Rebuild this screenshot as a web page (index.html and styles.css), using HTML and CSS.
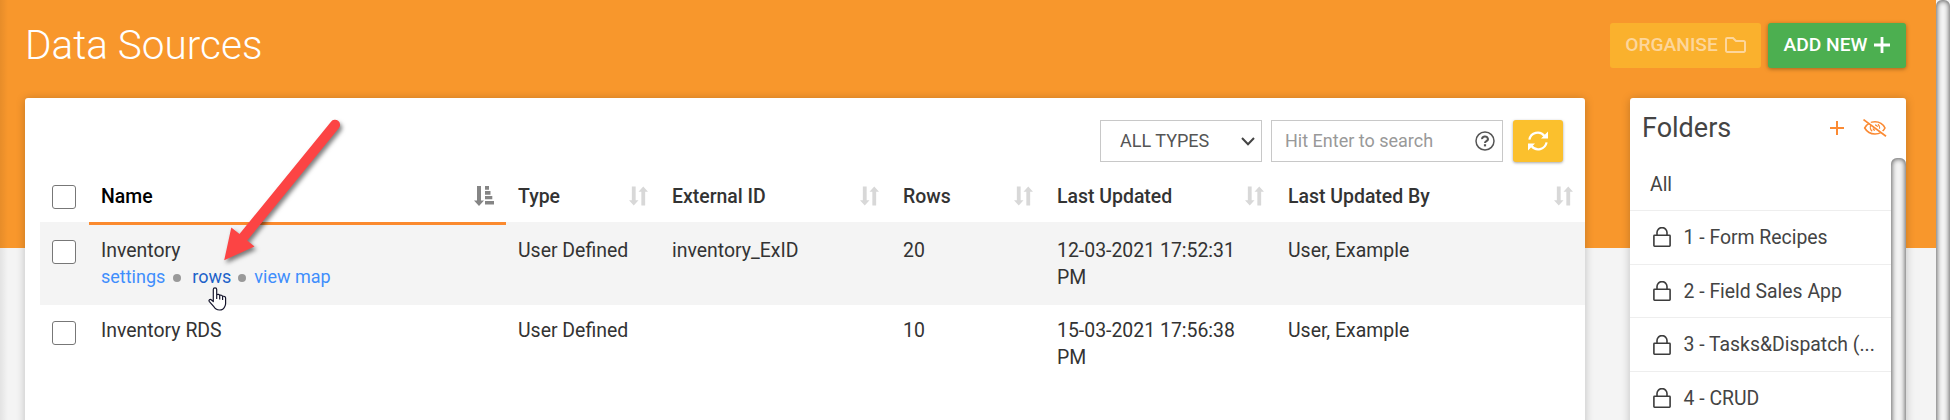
FILE: index.html
```html
<!DOCTYPE html>
<html lang="en">
<head>
<meta charset="utf-8">
<title>Data Sources</title>
<link rel="stylesheet" href="styles.css">
</head>
<body>
<svg class="defs" width="0" height="0">
  <symbol id="sort" viewBox="0 0 20 20"><path d="M3 0h4v14.500h3L5 20 0 14.500h3zM13 20h4V5.500h3L15 0l-5 5.500h3z"/></symbol>
  <symbol id="lock" viewBox="0 0 18 20"><path d="M1.500 8.300h15a.6.6 0 0 1 .6.600v9.700a.6.600 0 0 1-.6.600h-15a.6.600 0 0 1-.6-.600V8.900a.6.600 0 0 1 .6-.600zM4 8V5.600a5 5 0 0 1 10 0V8" fill="none" stroke="#3c3c3c" stroke-width="1.600"/></symbol>
</svg>
<div class="page">
  <main class="main">
    <header class="top">
      <h1 class="title">Data Sources</h1>
      <div class="actions">
        <button class="btn organise">ORGANISE
          <svg width="21" height="16" viewBox="0 0 21 16"><path d="M1 2.200A1.200 1.200 0 0 1 2.200 1H8l3 3h7.800A1.200 1.200 0 0 1 20 5.200v8.600a1.200 1.200 0 0 1-1.200 1.200H2.200A1.200 1.200 0 0 1 1 13.800z" fill="none" stroke="currentColor" stroke-width="2"/></svg>
        </button>
        <button class="btn add">ADD NEW
          <svg width="16" height="16" viewBox="0 0 16 16"><path d="M8 0v16M0 8h16" stroke="#fff" stroke-width="2.800"/></svg>
        </button>
      </div>
    </header>
    <div class="content">
      <section class="card sources">
        <div class="toolbar">
          <div class="select"><span>ALL TYPES</span>
            <svg width="14" height="9" viewBox="0 0 14 9"><path d="M1 1l6 6.200L13 1" fill="none" stroke="#444" stroke-width="2"/></svg>
          </div>
          <div class="search"><span>Hit Enter to search</span>
            <svg width="20" height="20" viewBox="0 0 20 20" fill="none" stroke="#555"><circle cx="10" cy="10" r="9" stroke-width="1.500"/><path d="M7.100 8.100a2.900 2.500 0 1 1 4.300 2.100c-1 .6-1.400.9-1.400 1.900" stroke-width="2"/><path d="M10 13.200v2.200" stroke-width="2.200"/></svg>
          </div>
          <button class="refresh">
            <svg width="20" height="20" viewBox="0 0 20 20" fill="none" stroke="#fff" stroke-width="2.200"><path d="M1.400 8.600A8.500 8.500 0 0 1 16.500 5M18.600 11.400A8.500 8.500 0 0 1 3.500 15"/><path d="M20 .6v7h-7zM0 19.400v-7h7z" fill="#fff" stroke="none"/></svg>
          </button>
        </div>
        <div class="grid">
          <div class="row head">
            <div class="cell pick"><i class="check"></i></div>
            <div class="cell sorted">Name
              <svg width="20" height="20" viewBox="0 0 20 20"><path d="M3 0h4v14.500h3L5 20 0 14.500h3zM11 0h4v3.700h-4zM11 5h5.500v3.700H11zM11 10h7.300v3.300H11zM11 15h9v3.600h-9z"/></svg></div>
            <div class="cell">Type <svg><use href="#sort"/></svg></div>
            <div class="cell">External ID <svg><use href="#sort"/></svg></div>
            <div class="cell">Rows <svg><use href="#sort"/></svg></div>
            <div class="cell">Last Updated <svg><use href="#sort"/></svg></div>
            <div class="cell">Last Updated By <svg><use href="#sort"/></svg></div>
          </div>
          <div class="row hovered">
            <div class="cell pick"><i class="check"></i></div>
            <div class="cell">Inventory
              <div class="links"><a>settings</a><i class="dot"></i><a class="current">rows</a><i class="dot"></i><a>view map</a></div>
            </div>
            <div class="cell">User Defined</div>
            <div class="cell">inventory_ExID</div>
            <div class="cell">20</div>
            <div class="cell">12-03-2021 17:52:31 PM</div>
            <div class="cell">User, Example</div>
          </div>
          <div class="row">
            <div class="cell pick"><i class="check"></i></div>
            <div class="cell">Inventory RDS</div>
            <div class="cell">User Defined</div>
            <div class="cell"></div>
            <div class="cell">10</div>
            <div class="cell">15-03-2021 17:56:38 PM</div>
            <div class="cell">User, Example</div>
          </div>
        </div>
      </section>
      <aside class="card folders">
        <div class="folders-head">
          <h2>Folders</h2>
          <svg class="plus" width="14" height="14" viewBox="0 0 14 14"><path d="M7 0v14M0 7h14" stroke="#fb8a33" stroke-width="2"/></svg>
          <svg width="24" height="18" viewBox="0 0 24 18" fill="none" stroke="#fb8a33" stroke-width="1.600"><path d="M1.700 9C4 5 7.600 2.800 12 2.800S20 5 22 9c-2 4-5.600 6-10 6S4 13 1.700 9z"/><path d="M8.200 5.500a5 5 0 0 0 1 6.700M15.500 12a5 5 0 0 0-.5-6.700M10 9.500a2.500 2.500 0 0 0 2 1.800M12 6a2.600 2.600 0 0 1 2.400 2" stroke-width="1.300"/><path d="M1.500 0L24 16.500" stroke="#fff" stroke-width="2"/><path d="M.5.6L23 17.300" stroke-width="1.700"/></svg>
        </div>
        <div class="folders-body">
          <ul>
            <li class="all">All</li>
            <li><svg class="lock"><use href="#lock"/></svg><span>1 - Form Recipes</span></li>
            <li><svg class="lock"><use href="#lock"/></svg><span>2 - Field Sales App</span></li>
            <li><svg class="lock"><use href="#lock"/></svg><span>3 - Tasks&amp;Dispatch (...</span></li>
            <li><svg class="lock"><use href="#lock"/></svg><span>4 - CRUD</span></li>
          </ul>
          <div class="bar"></div>
        </div>
      </aside>
    </div>
  </main>
  <div class="bar page-bar"></div>
</div>
<svg class="arrow" width="150" height="180" viewBox="210 110 150 180"><path d="M224.200 260.300l7.100-32.800 8.200 6.400L331 121.700a5 5 0 0 1 8 6.300L247.200 240.600l7.300 6z" fill="#fc4444"/></svg>
<svg class="cursor" width="19" height="24" viewBox="0 0 19 24"><path d="M5.300 14.500V2.500a1.700 1.700 0 0 1 3.400 0v5.200c1-.7 2.600-.4 3 .7 1-.5 2.500-.1 2.800 1 1.500-.5 3.100.2 3.100 1.700v5.400c0 1.200-.3 2.200-.9 3.200-.8 2-2.600 3.300-5.200 3.300-2.900 0-4.600-1.200-5.900-3.700L1.200 14.300c-.7-1.300.8-2.500 2-1.600zM8.700 7.700v4.200M11.700 8.500v3.900M14.600 9.500v3.400" fill="#fff" stroke="#15152c" stroke-width="1.200" stroke-linejoin="round"/></svg>
</body>
</html>
```
FILE: styles.css
```css
* { box-sizing: border-box; }
body {
  margin: 0;
  height: 420px;
  overflow: hidden;
  position: relative;
  font: 400 19.450px/26.670px Roboto, sans-serif;
  color: #333;
  background: #f4f4f4;
}
svg { display: block; flex: none; }
.defs { position: absolute; }
button { font: inherit; border: 0; }
h1, h2, ul { margin: 0; padding: 0; font-weight: 400; }
.page { display: flex; height: 420px; overflow: hidden; }
.main {
  flex: 1;
  padding: 0 30px 0 25px;
  background:
    linear-gradient(90deg, rgba(0,0,0,.07), transparent 8px),
    linear-gradient(#f8972c 248px, #f4f4f4 248px);
}
.top { display: flex; justify-content: space-between; height: 98px; padding-top: 23px; }
.title { font-size: 40.500px; font-weight: 300; line-height: 45px; color: #fff; }
.actions { display: flex; gap: 7px; }
.btn {
  display: flex;
  align-items: center;
  justify-content: center;
  gap: 7px;
  height: 45px;
  border-radius: 3px;
  padding: 0;
  font-size: 19.200px;
  font-weight: 500;
  white-space: nowrap;
}
.btn svg { margin-bottom: 2px; }
.organise { width: 151px; background: #fab12d; color: #fdd69b; }
.add { width: 138px; background: #4caf50; color: #fff; box-shadow: 0 1px 4px rgba(0,0,0,.35); }
.content { display: flex; justify-content: space-between; height: 322px; }
.card { background: #fff; border-radius: 3px 3px 0 0; box-shadow: 0 1px 10px rgba(0,0,0,.22); height: 340px; }
.sources { width: 1560px; padding: 22px 0 0 15px; }
.toolbar { display: flex; justify-content: flex-end; height: 42px; padding-right: 22px; margin-bottom: 3px; }
.select, .search {
  display: flex;
  align-items: center;
  justify-content: space-between;
  height: 42px;
  border: 1px solid #c8c8c8;
  font-size: 18px;
}
.select { width: 162px; padding: 0 6px 0 19px; margin-right: 9px; color: #555; }
.search { width: 232px; padding: 0 7px 0 13px; margin-right: 10px; color: #999; }
.refresh {
  width: 50px;
  display: flex;
  align-items: center;
  justify-content: center;
  border-radius: 3px;
  background: #fbc02d;
  box-shadow: 0 1px 3px rgba(0,0,0,.35);
}
.row { display: grid; grid-template-columns: 49px 417px 154px 231px 154px 231px 309px; height: 80px; }
.cell { padding: 13px 12px 0; }
.head { height: 60px; font-weight: 500; }
.head .cell {
  display: flex;
  justify-content: space-between;
  padding-top: 19px;
  border-bottom: 3px solid #f4f4f4;
}
.head .cell svg { width: 19px; height: 20px; margin-top: 2px; fill: #d8d8d8; }
.head .sorted { color: #000; border-bottom-color: #fb8a2e; }
.head .sorted svg { width: 20px; fill: #858585; }
.hovered { background: #f4f4f4; }
.cell.pick { padding: 15px 0 0 12px; }
.row:last-child .pick { padding-top: 16px; }
.head .cell.pick { padding-top: 20px; }
.check { display: block; width: 24px; height: 24px; border: 1px solid #777; border-radius: 3px; background: #fff; }
.links { display: flex; align-items: center; margin-top: -1px; color: #3f8efc; font-size: 18px; }
.links .current { color: #1d62c9; }
.dot { width: 8px; height: 8px; border-radius: 50%; background: #999; margin: 1px 11px 0 8px; }
.current + .dot { margin: 1px 8px 0 7px; }
.folders { width: 276px; color: #444; }
.folders-head { display: flex; align-items: center; height: 60px; padding: 0 19px 0 12px; }
.folders-head h2 { flex: 1; font-size: 27px; }
.plus { margin-right: 19px; }
.folders-body { display: flex; height: 262px; overflow: hidden; }
.folders ul { flex: 1; list-style: none; }
.folders li { display: flex; align-items: center; height: 53.700px; padding-left: 23px; border-top: 1px solid #eee; white-space: nowrap; font-size: 19.400px; }
.folders li span { padding-top: 2px; }
.folders .all { height: 52px; padding: 3px 0 0 20px; border: 0; }
.lock { width: 18px; height: 20px; margin-right: 12.500px; }
.bar {
  width: 15px;
  height: 500px;
  border-radius: 6px;
  background: #f3f3f3;
  box-shadow: inset 0 0 5px 1px rgba(0,0,0,.6);
}
.page-bar { width: 14px; flex: none; }
.arrow { position: absolute; left: 210px; top: 110px; filter: drop-shadow(2px 3px 2px rgba(0,0,0,.5)); }
.cursor { position: absolute; left: 208px; top: 287px; }
```
